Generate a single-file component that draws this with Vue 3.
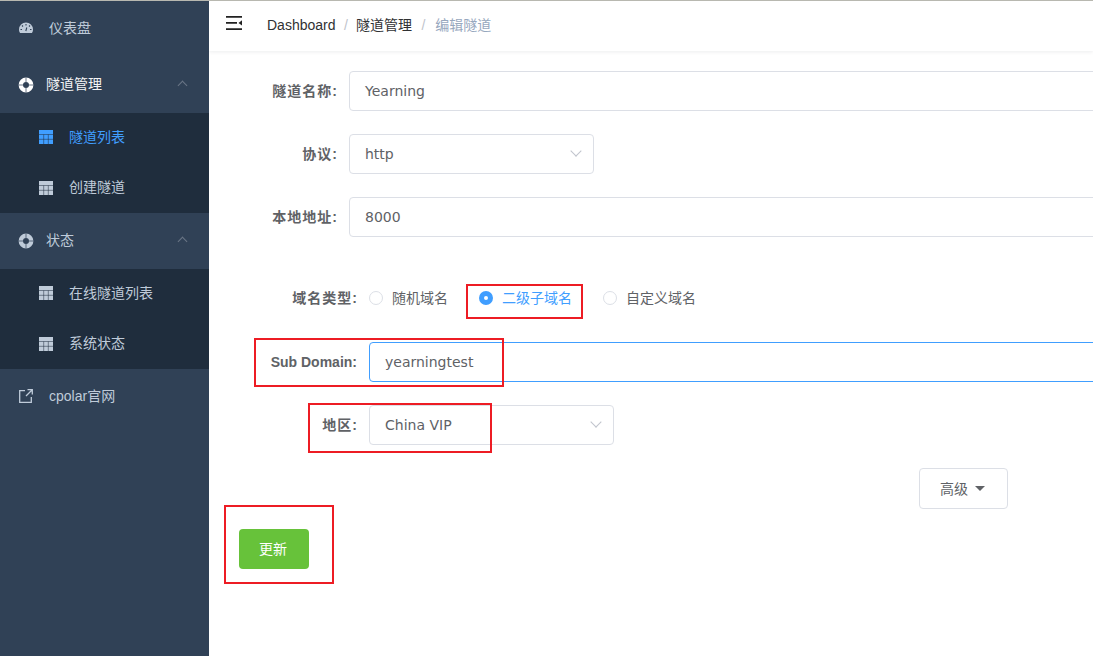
<template>
  <div class="page">
    <aside class="side">
      <a class="item">
        <svg class="ico up" viewBox="0 0 14 14"><path fill="#bfcbd9" d="M7 1.500A7 7 0 0 0 0 8.500c0 1.400.4 2.700 1.100 3.500h11.800c.7-.8 1.100-2.100 1.100-3.500a7 7 0 0 0-7-7z"/><path stroke="#304156" stroke-width="1.100" fill="none" d="M7 3v1.500M3 4.500l1 1M11 4.500l-1 1M1.500 8.500H3M11 8.500h1.500M7.800 6.500 6.800 10"/></svg>
        <span class="t0 cj">仪表盘</span>
      </a>
      <a class="item open"><svg class="ico lg" viewBox="0 0 16 16"><circle cx="8" cy="8" r="5.200" fill="none" stroke="#fff" stroke-width="4.400"/><path stroke="#304156" stroke-width=".9" stroke-opacity=".8" d="M.5 8h4.500M11 8h4.500M8 .5V5M8 11v4.500"/></svg>
        <span class="t1 cj">隧道管理</span><i class="chev"></i></a>
      <div class="sub">
        <a class="subitem on"><svg class="tb up" viewBox="0 0 14 14"><path fill="#409eff" d="M0 0h14v14H0z"/><path stroke="#1f2d3d" stroke-width=".8" stroke-opacity=".65" d="M0 4.500h14M0 9.300h14M4.700 4.500V14M9.300 4.500V14"/></svg><span class="cj">隧道列表</span></a>
        <a class="subitem"><svg class="tb" viewBox="0 0 14 14"><path fill="#bfcbd9" d="M0 0h14v14H0z"/><path stroke="#1f2d3d" stroke-width=".8" stroke-opacity=".65" d="M0 4.500h14M0 9.300h14M4.700 4.500V14M9.300 4.500V14"/></svg><span class="cj">创建隧道</span></a>
      </div>
      <a class="item"><svg class="ico lg" viewBox="0 0 16 16"><circle cx="8" cy="8" r="5.200" fill="none" stroke="#bfcbd9" stroke-width="4.400"/><path stroke="#304156" stroke-width=".9" stroke-opacity=".8" d="M.5 8h4.500M11 8h4.500M8 .5V5M8 11v4.500"/></svg>
        <span class="t1 cj">状态</span><i class="chev"></i></a>
      <div class="sub">
        <a class="subitem"><svg class="tb up" viewBox="0 0 14 14"><path fill="#bfcbd9" d="M0 0h14v14H0z"/><path stroke="#1f2d3d" stroke-width=".8" stroke-opacity=".65" d="M0 4.500h14M0 9.300h14M4.700 4.500V14M9.300 4.500V14"/></svg><span class="cj">在线隧道列表</span></a>
        <a class="subitem"><svg class="tb" viewBox="0 0 14 14"><path fill="#bfcbd9" d="M0 0h14v14H0z"/><path stroke="#1f2d3d" stroke-width=".8" stroke-opacity=".65" d="M0 4.500h14M0 9.300h14M4.700 4.500V14M9.300 4.500V14"/></svg><span class="cj">系统状态</span></a>
      </div>
      <a class="item"><svg class="ico up" viewBox="0 0 14 14"><path fill="none" stroke="#bfcbd9" stroke-width="1.300" d="M6 1.700H.7v11.600h11.600V8M7 7l6-6M8.500.7h4.800v4.800"/></svg><span class="t0 cj">cpolar官网</span></a>
    </aside>
    <main class="main">
      <header class="bar">
        <svg class="burger" viewBox="0 0 16 14"><path fill="#222" d="M0 0h16v1.800H0zM0 6h11v1.800H0zM0 12.200h16V14H0zM16 4.200v5.400L12.500 6.900z"/></svg>
        <nav class="crumb"><span>Dashboard</span><b>/</b><span class="dk">隧道管理</span><b class="b2">/</b><span class="last">编辑隧道</span></nav>
      </header>
      <form class="form">
        <div class="row"><label class="lb">隧道名称:</label><div class="inp wide">Yearning</div></div>
        <div class="row"><label class="lb">协议:</label><div class="inp sel">http<i class="down"></i></div></div>
        <div class="row"><label class="lb">本地地址:</label><div class="inp wide">8000</div></div>
        <div class="row radios">
          <label class="lb w2">域名类型:</label>
          <span class="rd"><i class="dot"></i><span class="rt">随机域名</span></span>
          <span class="rd on"><i class="dot"></i><span class="rt">二级子域名</span></span>
          <span class="rd"><i class="dot"></i><span class="rt">自定义域名</span></span>
        </div>
        <div class="row sd"><label class="lb w2 en">Sub Domain:</label><div class="inp wide focus">yearningtest</div></div>
        <div class="row"><label class="lb w2">地区:</label><div class="inp sel">China VIP<i class="down"></i></div></div>
        <div class="adv"><button type="button" class="advbtn"><span class="cj1">高级</span><i class="caret"></i></button></div>
        <button type="button" class="save"><span class="cj1">更新</span></button>
      </form>
      <div class="mark m1"></div><div class="mark m2"></div><div class="mark m3"></div><div class="mark m4"></div>
    </main>
  </div>
</template>

<script setup>
</script>

<style>
html, body { margin: 0; overflow: hidden; }
</style>

<style scoped>
.page { display: flex; width: 1093px; height: 656px; overflow: hidden; border-top: 1px solid #b8b8b0; box-sizing: border-box; font-family: "Liberation Sans", "Noto Sans CJK SC", sans-serif; font-size: 14px; }
.side { width: 209px; flex: none; background: #304156; color: #bfcbd9; }
.item { display: flex; align-items: center; height: 56px; padding-left: 19px; position: relative; }
.ico { width: 14px; height: 14px; flex: none; }
.up { margin-bottom: 2px; }
.ico.lg { width: 16px; height: 16px; margin-left: -1px; }
.cj { margin-bottom: 4px; }
.t0 { margin-left: 16px; }
.t1 { margin-left: 12px; }
.open { color: #f4f4f5; }
.chev { position: absolute; left: 179px; top: 25px; width: 6px; height: 6px; border-left: 1px solid #6a7686; border-top: 1px solid #6a7686; transform: rotate(45deg); }
.sub { background: #1f2d3d; }
.subitem { display: flex; align-items: center; height: 50px; padding-left: 39px; }
.subitem span { margin-left: 16px; }
.subitem.on { color: #409eff; }
.tb { width: 14px; height: 14px; flex: none; }
.main { flex: 1; min-width: 0; position: relative; overflow: hidden; }
.bar { height: 50px; display: flex; align-items: center; background: #fff; box-shadow: 0 1px 4px rgba(0, 21, 41, .08); }
.burger { width: 16px; height: 14px; margin-left: 17px; margin-top: -6px; flex: none; }
.crumb { margin-left: 25px; margin-bottom: 2px; color: #303133; display: flex; align-items: center; }
.crumb span { margin-bottom: 1px; }
.crumb span:first-child { margin-bottom: 0; }
.crumb b { font-weight: 400; color: #c0c4cc; margin: 0 8px 0 8.5px; }
.crumb .b2 { margin: 0 9px 0 9.5px; }
.crumb .dk { color: #303133; margin-bottom: 3px; }
.crumb .last { color: #97a8be; margin-bottom: 3px; margin-left: 1px; }
.form { padding-top: 20px; }
.row { display: flex; align-items: center; margin-bottom: 23px; height: 40px; }
.lb { box-sizing: content-box; width: 129px; padding-right: 11px; padding-bottom: 3px; text-align: right; color: #606266; font-weight: 700; flex: none; letter-spacing: 1px; }
.w2 { width: 149px; }
.en { font-size: 14px; letter-spacing: 0; width: 148px; padding-right: 12px; padding-bottom: 0; }
.inp { box-sizing: border-box; height: 40px; border: 1px solid #dcdfe6; border-radius: 4px; background: #fff; color: #606266; padding: 0 15px; line-height: 38px; font-family: "DejaVu Sans", "Noto Sans CJK SC", sans-serif; font-size: 14px; position: relative; flex: none; }
.wide { width: 900px; }
.sel { width: 245px; }
.focus { border-color: #409eff; }
.down { position: absolute; right: 13px; top: 12px; width: 7px; height: 7px; border-right: 1px solid #c0c4cc; border-bottom: 1px solid #c0c4cc; transform: rotate(45deg); }
.radios { margin: 41px 0 24px; height: 40px; }
.radios .lb { padding-bottom: 2px; }
.rd { display: inline-flex; align-items: center; color: #606266; font-size: 14px; margin-right: 31px; }
.rt { margin-bottom: 2px; }
.rd .dot { box-sizing: border-box; width: 14px; height: 14px; border: 1px solid #dcdfe6; border-radius: 50%; margin-right: 9px; background: #fff; }
.rd.on { color: #409eff; }
.rd.on .dot { border: 5px solid #409eff; }
.adv { margin-left: 710px; height: 41px; }
.advbtn { width: 89px; height: 41px; box-sizing: border-box; border: 1px solid #dcdfe6; border-radius: 4px; background: #fff; color: #606266; font: 14px "Liberation Sans", "Noto Sans CJK SC", sans-serif; display: flex; align-items: center; justify-content: center; padding: 0 2px 0 0; }
.cj1 { display: block; margin-bottom: 2px; }
.caret { width: 0; height: 0; border: 5px solid transparent; border-top-color: #606266; border-bottom: 0; margin-left: 7px; margin-bottom: 1px; }
.save { display: block; margin: 20px 0 0 30px; width: 70px; height: 40px; border: 0; border-radius: 4px; background: #67c23a; color: #fff; font: 14px "Liberation Sans", "Noto Sans CJK SC", sans-serif; padding: 0 2px 0 0; }
.mark { position: absolute; border: 2px solid #ed1c24; box-sizing: border-box; pointer-events: none; }
.m1 { left: 257px; top: 283px; width: 117px; height: 35px; }
.m2 { left: 45px; top: 337px; width: 250px; height: 49px; }
.m3 { left: 99px; top: 402px; width: 184px; height: 50px; }
.m4 { left: 15px; top: 504px; width: 110px; height: 79px; }
</style>
